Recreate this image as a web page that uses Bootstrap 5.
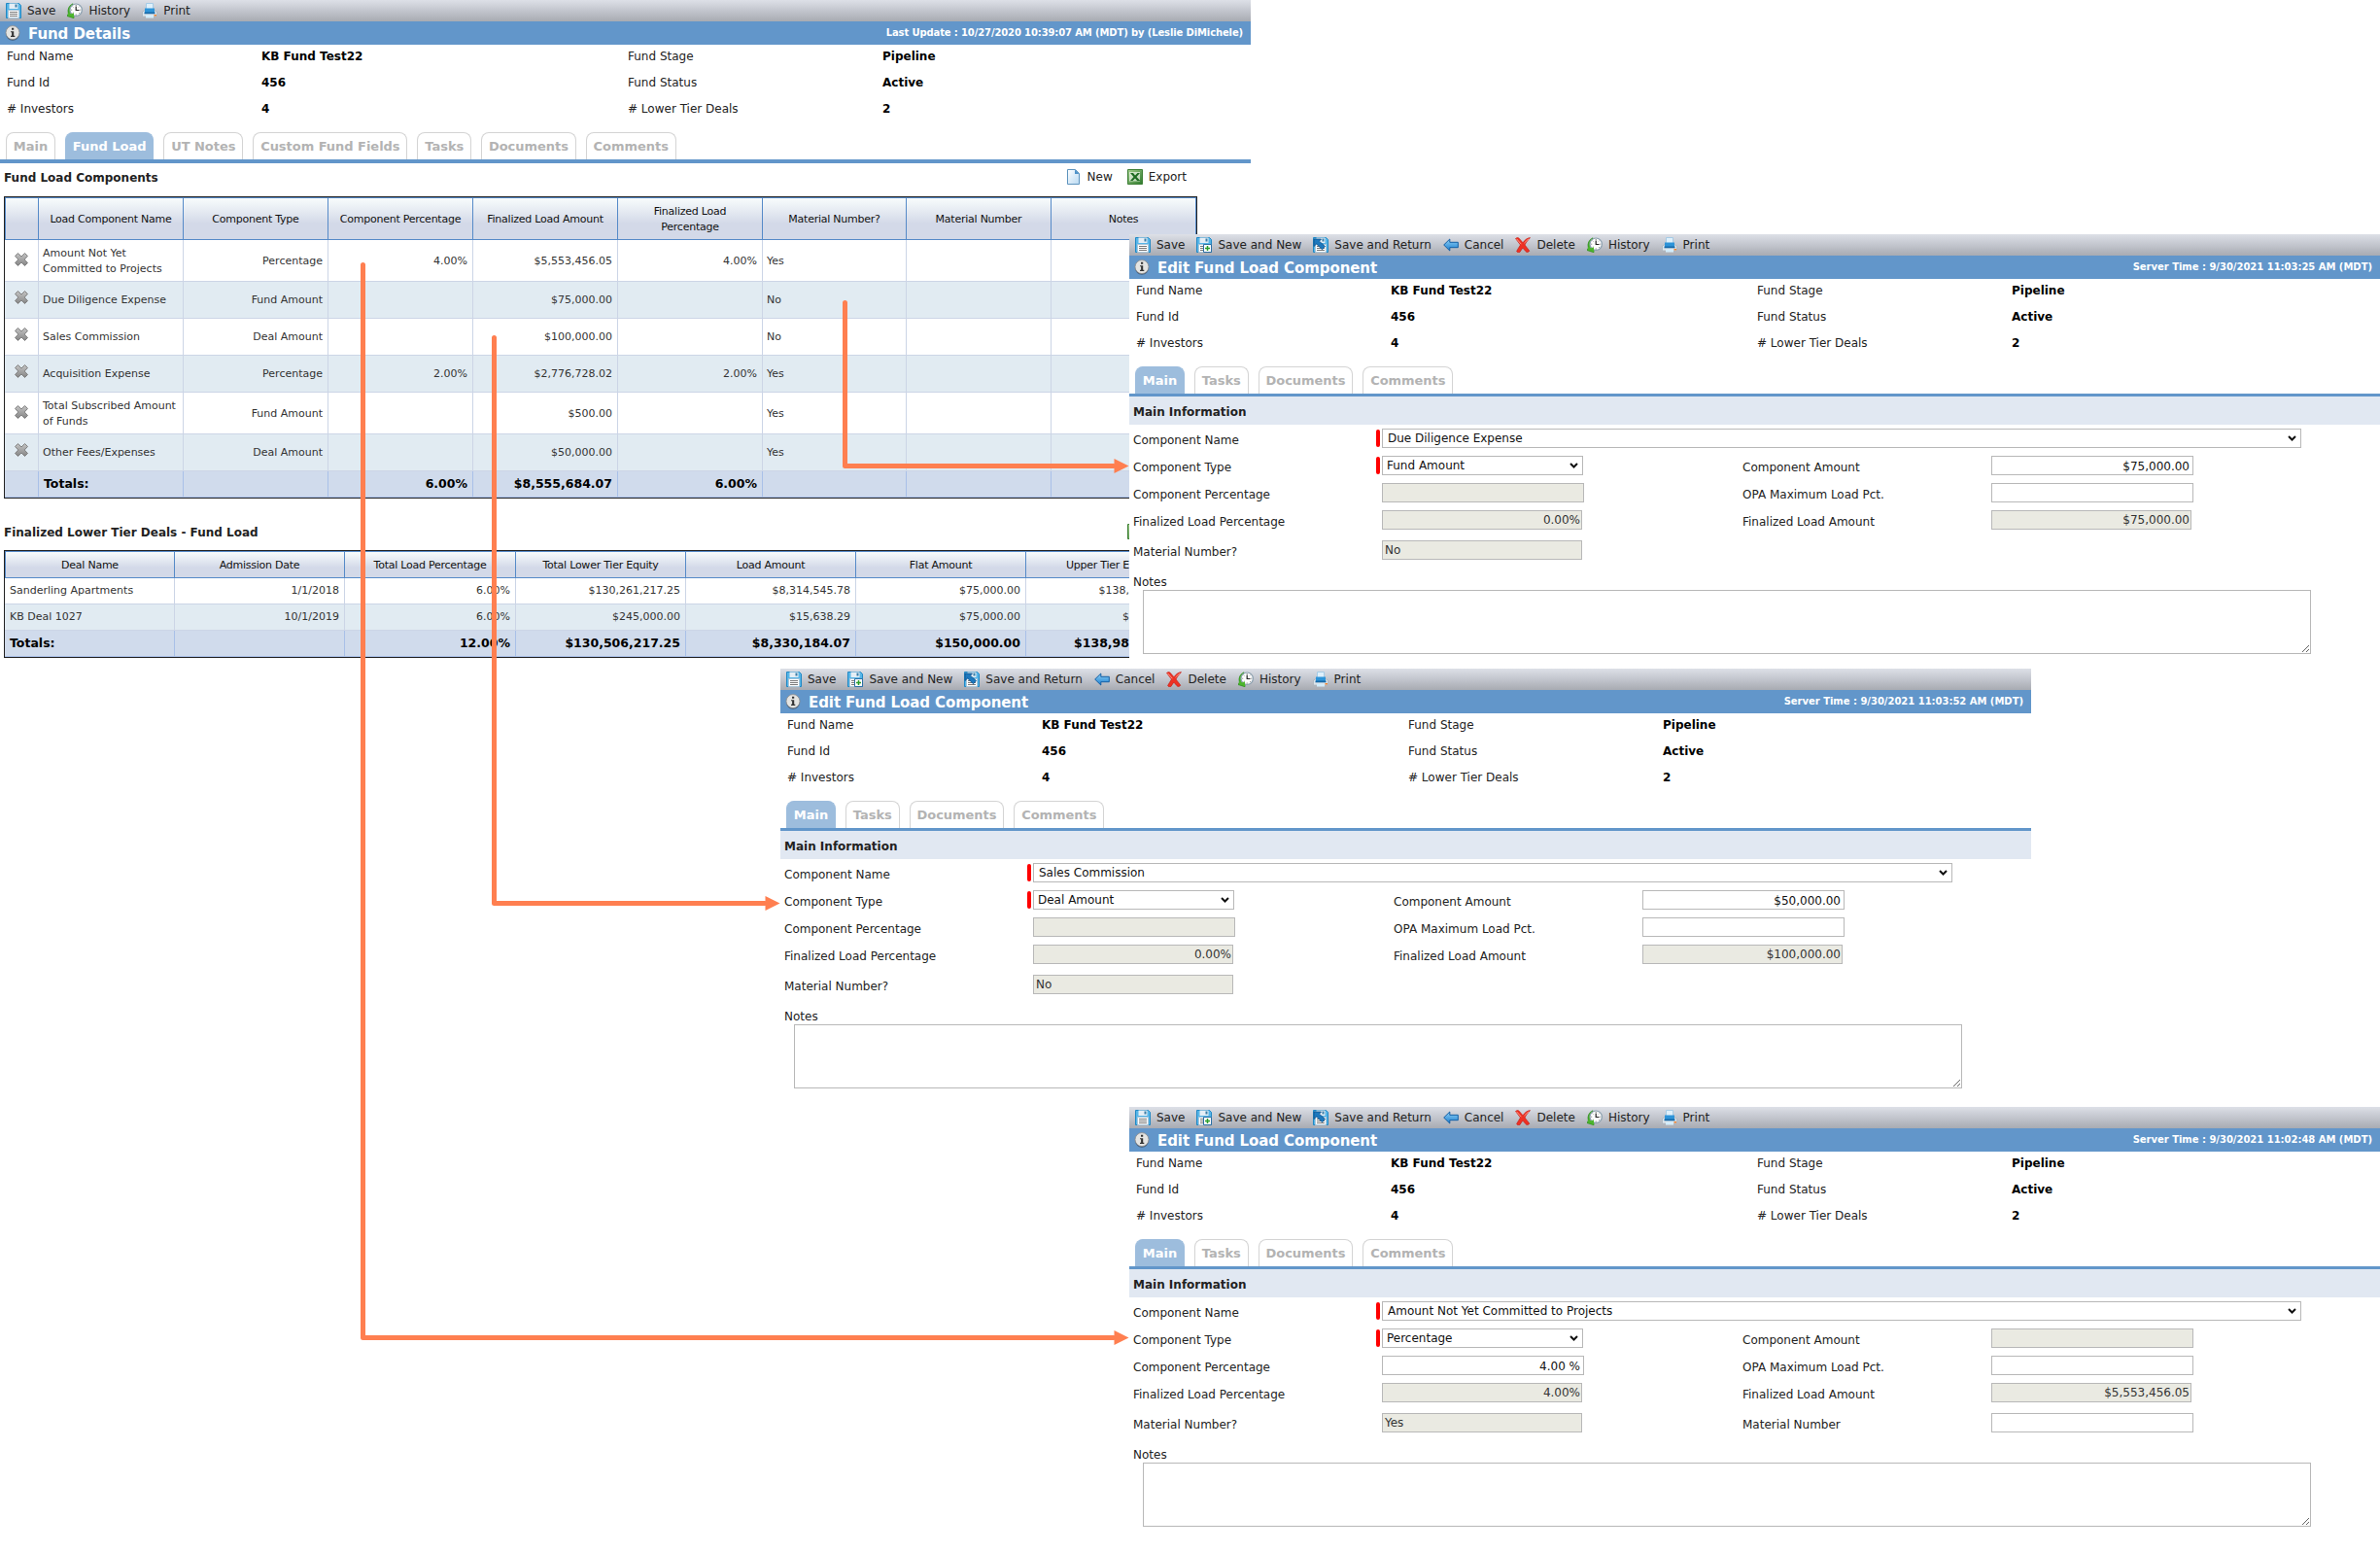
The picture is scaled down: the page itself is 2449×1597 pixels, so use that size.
<!DOCTYPE html>
<html lang="en">
<head>
  <meta charset="UTF-8" />
  <title>Fund Details</title>
  <meta name="viewport" content="width=device-width, initial-scale=1.0" />

  <link href="https://cdn.jsdelivr.net/npm/bootstrap@5.3.2/dist/css/bootstrap.min.css" rel="stylesheet" />

  <style>
    body {
      font-family: 'DejaVu Sans', Verdana, sans-serif;
      font-size: 12px;
      line-height: 16px;
      color: #222;
      background: #fff;
    }

    .board {
      position: relative;
      width: 2449px;
      height: 1597px;
      overflow: hidden;
    }

    /* Windows on the board */
    .win {
      position: absolute;
      width: 1287px;
      background: #fff;
    }
    .win-main { left: 0; top: 0; }
    .win-fund { left: 1162px; top: 241px; height: 447px; }
    .win-deal { left: 803px; top: 688px; height: 451px; }
    .win-pct { left: 1162px; top: 1139px; height: 458px; }

    .toolbar {
      height: 22px;
      padding-left: 6px;
      padding-bottom: 1px;
      background: linear-gradient(#dde0e7, #c5c8d0 45%, #a8abb2);
    }
    .tool svg { width: 16px; height: 16px; margin-right: 6px; }
    .tool { margin-right: 12px; }

    .title-bar {
      height: 24px;
      padding: 0 8px 0 5px;
      background: #6296ca;
      color: #fff;
      font-weight: 700;
    }
    .title-bar h1 { font-size: 15px; font-weight: 700; line-height: 20px; letter-spacing: -.08px; margin: 1px 0 0 8px; }
    .title-bar .stamp { font-size: 10px; letter-spacing: -.02px; }
    .win-main .stamp { letter-spacing: -.125px; }

    .info-line { line-height: 25px; height: 27px; padding-left: 7px; }
    .info-line span { width: 262px; }
    .info-line strong { width: 377px; color: #000; }

    .nav-tabs {
      margin-top: 9px;
      padding-left: 6px;
      gap: 10px;
      border-bottom: 3px solid #6296ca;
    }
    .win-main .nav-tabs { border-bottom-width: 4px; }
    .nav-tabs .nav-link {
      height: 28px;
      margin: 0;
      padding: 0 6.85px;
      line-height: 27px;
      font-size: 13px;
      font-weight: 700;
      letter-spacing: -.03px;
      color: #b3b3b3;
      border: 1px solid #d4d4d4;
      border-bottom: 0;
      border-radius: 8px 8px 0 0;
    }
    .nav-tabs .nav-link.active {
      color: #fff;
      background: #9dbddd;
      border-color: #9dbddd;
    }

    .list-head { height: 28px; padding: 0 66px 0 4px; }
    .list-head h2 { font-size: 12px; font-weight: 700; line-height: 30px; margin: 1px 0 0; }
    .list-head .tool { margin-right: 15px; }
    .list-head .tool:last-child { margin-right: 0; }
    .list-head.lower { margin-top: 20px; }

    /* Data grids */
    .data-grid {
      width: 1228px;
      margin-left: 4px;
      table-layout: fixed;
      border: 1px solid #222;
      border-collapse: separate;
      border-spacing: 0;
      font-size: 11px;
      color: #333;
    }
    .data-grid th {
      padding: 1px 10px 0;
      font-weight: 400;
      letter-spacing: -.24px;
      text-align: center;
      vertical-align: middle;
      color: #111;
      background: linear-gradient(#f8fcfc, #d3d9e8 62%);
      border: 0 solid #568ac8;
      border-width: 1px 1px 1px 0;
    }
    .data-grid th:first-child { border-left-width: 1px; }
    .data-grid td {
      padding: 0 5px 0 4px;
      vertical-align: middle;
      border: 0 solid #ccd5e6;
      border-width: 0 1px 1px 0;
    }
    .data-grid tbody tr:nth-child(even) td { background: #e1ebf2; }
    .data-grid tfoot td {
      height: 27px;
      padding-left: 5px;
      font-size: 12.5px;
      font-weight: 700;
      color: #000;
      background: #d0dbec;
      border-color: #a9c0e8;
    }
    .data-grid .del { padding: 0; text-align: center; }
    .data-grid .del svg { width: 16px; height: 16px; margin-top: -5px; }
    .components { margin-top: 6px; }
    .components th { height: 44px; }
    .components td { height: 38px; }
    .components .tall td { height: 43px; padding-top: 2px; }
    .deals { margin-top: 5px; }
    .deals th { height: 28px; }
    .deals td { height: 27px; }
    .deals td:first-child { padding-left: 5px; }
    /* last column runs under the window beside it */
    .deals .cut { padding-left: 0; padding-right: 68px; text-align: right; white-space: nowrap; }

    /* Edit form */
    .section-head {
      height: 29px;
      line-height: 32px;
      padding-left: 4px;
      font-weight: 700;
      background: #e1e8f2;
    }
    .edit-form { padding: 4px 0 0 4px; }
    .form-line { height: 28px; }
    .form-line.gap-below { height: 31px; }
    .form-line.last-line { height: 35px; }
    .form-line label { width: 250px; line-height: 24px; }
    .form-line .second { width: 256px; }
    .form-line .field { width: 377px; padding-left: 6px; }
    .form-line .field.required { padding-left: 0; }
    .field.required::before {
      content: "";
      flex: none;
      width: 4px;
      height: 18px;
      margin: 1px 2px 0 0;
      border-radius: 2px;
      background: #f00;
    }
    .edit-form .form-control,
    .edit-form .form-select {
      width: 208px;
      height: 20px;
      min-height: 0;
      padding: 1px 3px 0;
      font-size: 12px;
      line-height: 17px;
      color: #111;
      border: 1px solid #b8b8b8;
      border-radius: 0;
    }
    .edit-form .form-select {
      width: 207px;
      padding-left: 4px;
      background-image: url("data:image/svg+xml,%3Csvg xmlns='http://www.w3.org/2000/svg' viewBox='0 0 9 6'%3E%3Cpath d='M1 1l3.5 3.5L8 1' fill='none' stroke='%23111' stroke-width='2'/%3E%3C/svg%3E");
      background-size: 9px 6px;
      background-position: right 4px center;
    }
    .edit-form .form-select.wide { width: 946px; padding-left: 5px; }
    .edit-form .form-control.locked { background: #eaeae2; }
    .edit-form div.locked { width: 206px; padding: 0 1px 0 2px; line-height: 18px; color: #333; }
    .edit-form textarea.form-control { width: 1202px; height: 66px; min-height: 66px; margin: 0 0 0 10px; resize: vertical; }

    .icon-defs { position: absolute; width: 0; height: 0; }
    .arrows { position: absolute; left: 0; top: 0; pointer-events: none; }
  </style>
</head>
<body>

  <!-- Icons -->
  <svg class="icon-defs">
    <linearGradient id="g-blue" x2="0" y2="1"><stop stop-color="#8fd0f5" /><stop offset="1" stop-color="#1b7fd0" /></linearGradient>
    <linearGradient id="g-grey" x2="0" y2="1"><stop stop-color="#c4c4c4" /><stop offset="1" stop-color="#858585" /></linearGradient>
    <linearGradient id="g-page" x2="1" y2="1"><stop stop-color="#fff" /><stop offset="1" stop-color="#b9d9f2" /></linearGradient>
    <linearGradient id="g-green" x2="1" y2="1"><stop stop-color="#a4cf8d" /><stop offset="1" stop-color="#2c7a2b" /></linearGradient>
    <symbol id="i-save" viewBox="0 0 16 16">
      <path d="M.5.5h13l2 2v13H.5z" fill="#56b5e8" stroke="#2188c4" />
      <path d="M3.500.5h9v5.500h-9z" fill="#e5eef5" />
      <path d="M9.500 1.500h2v3h-2z" fill="#3c7ea8" />
      <path d="M2.500 7.500h11v8h-11z" fill="#fff" stroke="#a9c5d8" />
      <path d="M4 9.500h8M4 11.500h8M4 13.500h8" stroke="#777" />
    </symbol>
    <symbol id="i-save-new" viewBox="0 0 16 16">
      <use href="#i-save" />
      <path d="M7.500 7.500h8v8h-8z" fill="#fff" stroke="#2b6fa5" />
      <path d="M11.500 9v5M9 11.500h5" stroke="#2a9d2a" stroke-width="1.500" />
    </symbol>
    <symbol id="i-save-return" viewBox="0 0 16 16">
      <use href="#i-save" />
      <path d="M1 2h7.500L6.500 4.200l6 5.300-3 3.200L3.600 7 1 9.500z" fill="#1d78bd" stroke="#0c4f8a" stroke-width=".8" />
    </symbol>
    <symbol id="i-cancel" viewBox="0 0 16 16">
      <path d="M.7 8l6.100-6v3.300h8.500v5.400H6.800V14z" fill="url(#g-blue)" stroke="#135fa5" stroke-linejoin="round" />
    </symbol>
    <symbol id="i-delete" viewBox="0 0 16 16">
      <path d="M.5 1.500C2 .3 3.500.2 4.600 1.800L8 5.800C10 3 12 1 15.500.6 13.500 3 11.500 5 10 8l4.800 6.200c-1.300 1.500-3 1.700-4 .3L7.800 11c-1 1.500-2 3.500-3.300 4.800-1.400.2-2.300-.3-2.900-1.200C2.600 12.500 4 10.500 5.500 8z" fill="#ee3124" stroke="#c2170f" stroke-width=".6" />
      <path d="M1.500 1.800l4.800 5.400M14 1.700L9.500 6" stroke="#ff9a8a" fill="none" />
    </symbol>
    <symbol id="i-history" viewBox="0 0 16 16">
      <path d="M6 .8A8 8 0 0 0 1.500 11L0 13.500l7 2.200V10L5 11z" fill="#4cb52c" stroke="#278a17" stroke-width=".7" />
      <circle cx="9.200" cy="7.200" r="6.200" fill="#fff" stroke="#8b9fae" stroke-width="1.200" />
      <path d="M9.200 3.500v4h3.300" fill="none" stroke="#222" stroke-width="1.200" />
      <path d="M9.200 2v1M9.200 11.500v1M4.200 7.200h1M13.300 7.200h1M5.700 3.700l.7.700M12 10l.7.700M12.700 3.700l-.7.700M5.700 10.700l.7-.7" stroke="#555" stroke-width=".8" />
      <path d="M.8 9.500l2.500 2.200 3.700-1.500v5.300L4.800 14 1 13z" fill="#4cb52c" />
    </symbol>
    <symbol id="i-print" viewBox="0 0 16 16">
      <path d="M4.500.5h7v7h-7z" fill="#dff0fb" stroke="#a5cbe5" />
      <path d="M.5 9l2-1h11l2 1v5H.5z" fill="#dfe5ea" stroke="#aab4bc" stroke-width=".8" />
      <path d="M3 5.500h10v4.500H3z" fill="#2e94d8" />
      <path d="M2.500 9.500h11v1.800h-11z" fill="#1769a8" />
      <path d="M4 12.500h8v3H4z" fill="#d2ecfb" />
      <path d="M12.500 12h2.500v1.500h-2.500z" fill="#f2812b" />
    </symbol>
    <symbol id="i-info" viewBox="0 0 16 16">
      <circle cx="8" cy="8.800" r="7" fill="#3f5c7a" />
      <circle cx="8" cy="7.600" r="7" fill="#e4e4e2" stroke="#8b8b8b" stroke-width=".8" />
      <path d="M7 2.800h2.200v2H7zM6 6.200h3.200v4.600h1.100v1.100H6v-1.100h1.100V7.300H6z" fill="#333" />
    </symbol>
    <symbol id="i-new" viewBox="0 0 16 16">
      <path d="M1.500.5h8l4 4v11h-12z" fill="url(#g-page)" stroke="#5d93bd" />
      <path d="M9 .5v4.500h4.500z" fill="#4f93c9" />
    </symbol>
    <symbol id="i-excel" viewBox="0 0 16 16">
      <path d="M.5.5h15v15H.5z" fill="url(#g-green)" stroke="#3d7f35" />
      <path d="M2 3h11v9.500H2z" fill="#e9f3e4" opacity=".75" />
      <path d="M3 4h3l2 2.500L10.500 4H13L9.500 8l3.800 4h-3.200L8 9.500 5.500 12H3l3.500-4z" fill="#1e6b22" />
    </symbol>
    <symbol id="i-x" viewBox="0 0 16 16">
      <path d="M4.500 1.500L8 5l3.500-3.500L14.500 4.500 11.200 8l3.300 3.500-3 3L8 11l-3.500 3.500-3-3L4.800 8 1.500 4.500z" fill="url(#g-grey)" stroke="#808080" stroke-linejoin="round" />
    </symbol>
  </svg>

  <div class="board">

    <!-- Fund Details -->
    <div class="win win-main">
      <div class="toolbar d-flex align-items-center">
        <div class="tool d-flex"><svg><use href="#i-save" /></svg>Save</div>
        <div class="tool d-flex"><svg><use href="#i-history" /></svg>History</div>
        <div class="tool d-flex"><svg><use href="#i-print" /></svg>Print</div>
      </div>
      <div class="title-bar d-flex align-items-center">
        <svg width="16" height="16"><use href="#i-info" /></svg>
        <h1>Fund Details</h1>
        <span class="stamp ms-auto">Last Update : 10/27/2020 10:39:07 AM (MDT) by (Leslie DiMichele)</span>
      </div>
      <div class="info-line d-flex"><span>Fund Name</span><strong>KB Fund Test22</strong><span>Fund Stage</span><strong>Pipeline</strong></div>
      <div class="info-line d-flex"><span>Fund Id</span><strong>456</strong><span>Fund Status</span><strong>Active</strong></div>
      <div class="info-line d-flex"><span># Investors</span><strong>4</strong><span># Lower Tier Deals</span><strong>2</strong></div>
      <ul class="nav nav-tabs">
        <li class="nav-item"><a class="nav-link">Main</a></li>
        <li class="nav-item"><a class="nav-link active">Fund Load</a></li>
        <li class="nav-item"><a class="nav-link">UT Notes</a></li>
        <li class="nav-item"><a class="nav-link">Custom Fund Fields</a></li>
        <li class="nav-item"><a class="nav-link">Tasks</a></li>
        <li class="nav-item"><a class="nav-link">Documents</a></li>
        <li class="nav-item"><a class="nav-link">Comments</a></li>
      </ul>

      <div class="list-head d-flex align-items-center">
        <h2 class="me-auto">Fund Load Components</h2>
        <div class="tool d-flex"><svg><use href="#i-new" /></svg>New</div>
        <div class="tool d-flex"><svg><use href="#i-excel" /></svg>Export</div>
      </div>
      <table class="data-grid components">
        <colgroup>
          <col width="35" /><col width="149" /><col width="149" /><col width="149" /><col width="149" />
          <col width="149" /><col width="148" /><col width="149" /><col width="149" />
        </colgroup>
        <thead>
          <tr>
            <th></th><th>Load Component Name</th><th>Component Type</th><th>Component Percentage</th><th>Finalized Load Amount</th>
            <th>Finalized Load Percentage</th><th>Material Number?</th><th>Material Number</th><th>Notes</th>
          </tr>
        </thead>
        <tbody>
          <tr class="tall">
            <td class="del"><svg><use href="#i-x" /></svg></td><td>Amount Not Yet Committed to Projects</td><td class="text-end">Percentage</td>
            <td class="text-end">4.00%</td><td class="text-end">$5,553,456.05</td><td class="text-end">4.00%</td><td>Yes</td><td></td><td></td>
          </tr>
          <tr>
            <td class="del"><svg><use href="#i-x" /></svg></td><td>Due Diligence Expense</td><td class="text-end">Fund Amount</td>
            <td></td><td class="text-end">$75,000.00</td><td></td><td>No</td><td></td><td></td>
          </tr>
          <tr>
            <td class="del"><svg><use href="#i-x" /></svg></td><td>Sales Commission</td><td class="text-end">Deal Amount</td>
            <td></td><td class="text-end">$100,000.00</td><td></td><td>No</td><td></td><td></td>
          </tr>
          <tr>
            <td class="del"><svg><use href="#i-x" /></svg></td><td>Acquisition Expense</td><td class="text-end">Percentage</td>
            <td class="text-end">2.00%</td><td class="text-end">$2,776,728.02</td><td class="text-end">2.00%</td><td>Yes</td><td></td><td></td>
          </tr>
          <tr class="tall">
            <td class="del"><svg><use href="#i-x" /></svg></td><td>Total Subscribed Amount of Funds</td><td class="text-end">Fund Amount</td>
            <td></td><td class="text-end">$500.00</td><td></td><td>Yes</td><td></td><td></td>
          </tr>
          <tr>
            <td class="del"><svg><use href="#i-x" /></svg></td><td>Other Fees/Expenses</td><td class="text-end">Deal Amount</td>
            <td></td><td class="text-end">$50,000.00</td><td></td><td>Yes</td><td></td><td></td>
          </tr>
        </tbody>
        <tfoot>
          <tr>
            <td></td><td>Totals:</td><td></td><td class="text-end">6.00%</td><td class="text-end">$8,555,684.07</td>
            <td class="text-end">6.00%</td><td></td><td></td><td></td>
          </tr>
        </tfoot>
      </table>

      <div class="list-head lower d-flex align-items-center">
        <h2 class="me-auto">Finalized Lower Tier Deals - Fund Load</h2>
        <div class="tool d-flex"><svg><use href="#i-excel" /></svg>Export</div>
      </div>
      <table class="data-grid deals">
        <colgroup>
          <col width="175" /><col width="175" /><col width="176" /><col width="175" /><col width="175" /><col width="175" /><col width="175" />
        </colgroup>
        <thead>
          <tr>
            <th>Deal Name</th><th>Admission Date</th><th>Total Load Percentage</th><th>Total Lower Tier Equity</th>
            <th>Load Amount</th><th>Flat Amount</th><th class="cut">Upper Tier E</th>
          </tr>
        </thead>
        <tbody>
          <tr>
            <td>Sanderling Apartments</td><td class="text-end">1/1/2018</td><td class="text-end">6.00%</td><td class="text-end">$130,261,217.25</td>
            <td class="text-end">$8,314,545.78</td><td class="text-end">$75,000.00</td><td class="cut">$138,</td>
          </tr>
          <tr>
            <td>KB Deal 1027</td><td class="text-end">10/1/2019</td><td class="text-end">6.00%</td><td class="text-end">$245,000.00</td>
            <td class="text-end">$15,638.29</td><td class="text-end">$75,000.00</td><td class="cut">$</td>
          </tr>
        </tbody>
        <tfoot>
          <tr>
            <td>Totals:</td><td></td><td class="text-end">12.00%</td><td class="text-end">$130,506,217.25</td>
            <td class="text-end">$8,330,184.07</td><td class="text-end">$150,000.00</td><td class="cut">$138,98</td>
          </tr>
        </tfoot>
      </table>
    </div>

    <!-- Edit: Due Diligence Expense -->
    <div class="win win-fund">
      <div class="toolbar d-flex align-items-center">
        <div class="tool d-flex"><svg><use href="#i-save" /></svg>Save</div>
        <div class="tool d-flex"><svg><use href="#i-save-new" /></svg>Save and New</div>
        <div class="tool d-flex"><svg><use href="#i-save-return" /></svg>Save and Return</div>
        <div class="tool d-flex"><svg><use href="#i-cancel" /></svg>Cancel</div>
        <div class="tool d-flex"><svg><use href="#i-delete" /></svg>Delete</div>
        <div class="tool d-flex"><svg><use href="#i-history" /></svg>History</div>
        <div class="tool d-flex"><svg><use href="#i-print" /></svg>Print</div>
      </div>
      <div class="title-bar d-flex align-items-center">
        <svg width="16" height="16"><use href="#i-info" /></svg>
        <h1>Edit Fund Load Component</h1>
        <span class="stamp ms-auto">Server Time : 9/30/2021 11:03:25 AM (MDT)</span>
      </div>
      <div class="info-line d-flex"><span>Fund Name</span><strong>KB Fund Test22</strong><span>Fund Stage</span><strong>Pipeline</strong></div>
      <div class="info-line d-flex"><span>Fund Id</span><strong>456</strong><span>Fund Status</span><strong>Active</strong></div>
      <div class="info-line d-flex"><span># Investors</span><strong>4</strong><span># Lower Tier Deals</span><strong>2</strong></div>
      <ul class="nav nav-tabs">
        <li class="nav-item"><a class="nav-link active">Main</a></li>
        <li class="nav-item"><a class="nav-link">Tasks</a></li>
        <li class="nav-item"><a class="nav-link">Documents</a></li>
        <li class="nav-item"><a class="nav-link">Comments</a></li>
      </ul>
      <div class="section-head">Main Information</div>
      <div class="edit-form">
        <div class="form-line d-flex">
          <label>Component Name</label>
          <div class="field required d-flex"><select class="form-select wide flex-shrink-0"><option>Due Diligence Expense</option></select></div>
        </div>
        <div class="form-line d-flex">
          <label>Component Type</label>
          <div class="field required d-flex"><select class="form-select"><option>Fund Amount</option></select></div>
          <label class="second">Component Amount</label>
          <input class="form-control text-end" value="$75,000.00" />
        </div>
        <div class="form-line d-flex">
          <label>Component Percentage</label>
          <div class="field"><input class="form-control locked" /></div>
          <label class="second">OPA Maximum Load Pct.</label>
          <input class="form-control" />
        </div>
        <div class="form-line gap-below d-flex">
          <label>Finalized Load Percentage</label>
          <div class="field"><div class="form-control locked text-end">0.00%</div></div>
          <label class="second">Finalized Load Amount</label>
          <div class="form-control locked text-end">$75,000.00</div>
        </div>
        <div class="form-line last-line d-flex">
          <label>Material Number?</label>
          <div class="field"><div class="form-control locked">No</div></div>
        </div>
        <div>Notes</div>
        <textarea class="form-control"></textarea>
      </div>
    </div>

    <!-- Edit: Sales Commission -->
    <div class="win win-deal">
      <div class="toolbar d-flex align-items-center">
        <div class="tool d-flex"><svg><use href="#i-save" /></svg>Save</div>
        <div class="tool d-flex"><svg><use href="#i-save-new" /></svg>Save and New</div>
        <div class="tool d-flex"><svg><use href="#i-save-return" /></svg>Save and Return</div>
        <div class="tool d-flex"><svg><use href="#i-cancel" /></svg>Cancel</div>
        <div class="tool d-flex"><svg><use href="#i-delete" /></svg>Delete</div>
        <div class="tool d-flex"><svg><use href="#i-history" /></svg>History</div>
        <div class="tool d-flex"><svg><use href="#i-print" /></svg>Print</div>
      </div>
      <div class="title-bar d-flex align-items-center">
        <svg width="16" height="16"><use href="#i-info" /></svg>
        <h1>Edit Fund Load Component</h1>
        <span class="stamp ms-auto">Server Time : 9/30/2021 11:03:52 AM (MDT)</span>
      </div>
      <div class="info-line d-flex"><span>Fund Name</span><strong>KB Fund Test22</strong><span>Fund Stage</span><strong>Pipeline</strong></div>
      <div class="info-line d-flex"><span>Fund Id</span><strong>456</strong><span>Fund Status</span><strong>Active</strong></div>
      <div class="info-line d-flex"><span># Investors</span><strong>4</strong><span># Lower Tier Deals</span><strong>2</strong></div>
      <ul class="nav nav-tabs">
        <li class="nav-item"><a class="nav-link active">Main</a></li>
        <li class="nav-item"><a class="nav-link">Tasks</a></li>
        <li class="nav-item"><a class="nav-link">Documents</a></li>
        <li class="nav-item"><a class="nav-link">Comments</a></li>
      </ul>
      <div class="section-head">Main Information</div>
      <div class="edit-form">
        <div class="form-line d-flex">
          <label>Component Name</label>
          <div class="field required d-flex"><select class="form-select wide flex-shrink-0"><option>Sales Commission</option></select></div>
        </div>
        <div class="form-line d-flex">
          <label>Component Type</label>
          <div class="field required d-flex"><select class="form-select"><option>Deal Amount</option></select></div>
          <label class="second">Component Amount</label>
          <input class="form-control text-end" value="$50,000.00" />
        </div>
        <div class="form-line d-flex">
          <label>Component Percentage</label>
          <div class="field"><input class="form-control locked" /></div>
          <label class="second">OPA Maximum Load Pct.</label>
          <input class="form-control" />
        </div>
        <div class="form-line gap-below d-flex">
          <label>Finalized Load Percentage</label>
          <div class="field"><div class="form-control locked text-end">0.00%</div></div>
          <label class="second">Finalized Load Amount</label>
          <div class="form-control locked text-end">$100,000.00</div>
        </div>
        <div class="form-line last-line d-flex">
          <label>Material Number?</label>
          <div class="field"><div class="form-control locked">No</div></div>
        </div>
        <div>Notes</div>
        <textarea class="form-control"></textarea>
      </div>
    </div>

    <!-- Edit: Amount Not Yet Committed to Projects -->
    <div class="win win-pct">
      <div class="toolbar d-flex align-items-center">
        <div class="tool d-flex"><svg><use href="#i-save" /></svg>Save</div>
        <div class="tool d-flex"><svg><use href="#i-save-new" /></svg>Save and New</div>
        <div class="tool d-flex"><svg><use href="#i-save-return" /></svg>Save and Return</div>
        <div class="tool d-flex"><svg><use href="#i-cancel" /></svg>Cancel</div>
        <div class="tool d-flex"><svg><use href="#i-delete" /></svg>Delete</div>
        <div class="tool d-flex"><svg><use href="#i-history" /></svg>History</div>
        <div class="tool d-flex"><svg><use href="#i-print" /></svg>Print</div>
      </div>
      <div class="title-bar d-flex align-items-center">
        <svg width="16" height="16"><use href="#i-info" /></svg>
        <h1>Edit Fund Load Component</h1>
        <span class="stamp ms-auto">Server Time : 9/30/2021 11:02:48 AM (MDT)</span>
      </div>
      <div class="info-line d-flex"><span>Fund Name</span><strong>KB Fund Test22</strong><span>Fund Stage</span><strong>Pipeline</strong></div>
      <div class="info-line d-flex"><span>Fund Id</span><strong>456</strong><span>Fund Status</span><strong>Active</strong></div>
      <div class="info-line d-flex"><span># Investors</span><strong>4</strong><span># Lower Tier Deals</span><strong>2</strong></div>
      <ul class="nav nav-tabs">
        <li class="nav-item"><a class="nav-link active">Main</a></li>
        <li class="nav-item"><a class="nav-link">Tasks</a></li>
        <li class="nav-item"><a class="nav-link">Documents</a></li>
        <li class="nav-item"><a class="nav-link">Comments</a></li>
      </ul>
      <div class="section-head">Main Information</div>
      <div class="edit-form">
        <div class="form-line d-flex">
          <label>Component Name</label>
          <div class="field required d-flex"><select class="form-select wide flex-shrink-0"><option>Amount Not Yet Committed to Projects</option></select></div>
        </div>
        <div class="form-line d-flex">
          <label>Component Type</label>
          <div class="field required d-flex"><select class="form-select"><option>Percentage</option></select></div>
          <label class="second">Component Amount</label>
          <input class="form-control locked" />
        </div>
        <div class="form-line d-flex">
          <label>Component Percentage</label>
          <div class="field"><input class="form-control text-end" value="4.00 %" /></div>
          <label class="second">OPA Maximum Load Pct.</label>
          <input class="form-control" />
        </div>
        <div class="form-line gap-below d-flex">
          <label>Finalized Load Percentage</label>
          <div class="field"><div class="form-control locked text-end">4.00%</div></div>
          <label class="second">Finalized Load Amount</label>
          <div class="form-control locked text-end">$5,553,456.05</div>
        </div>
        <div class="form-line last-line d-flex">
          <label>Material Number?</label>
          <div class="field"><div class="form-control locked">Yes</div></div>
          <label class="second">Material Number</label>
          <input class="form-control" />
        </div>
        <div>Notes</div>
        <textarea class="form-control"></textarea>
      </div>
    </div>

    <!-- Arrows from table cells to the matching edit window -->
    <svg class="arrows" width="2449" height="1597" fill="none" stroke="#ff7f50" stroke-width="5" stroke-linecap="round" stroke-linejoin="round">
      <path d="M373.500 272.500V1376.500H1146" />
      <path d="M508.500 347.500V929.500H787" />
      <path d="M869.500 311.500V479.500H1146" />
      <path d="M1146.500 1369v15l15-7.500zM787.500 922v15l15-7.500zM1146.500 472v15l15-7.500z" fill="#ff7f50" stroke="none" />
    </svg>
  </div>

  <script src="https://cdn.jsdelivr.net/npm/bootstrap@5.3.2/dist/js/bootstrap.bundle.min.js"></script>
</body>
</html>
